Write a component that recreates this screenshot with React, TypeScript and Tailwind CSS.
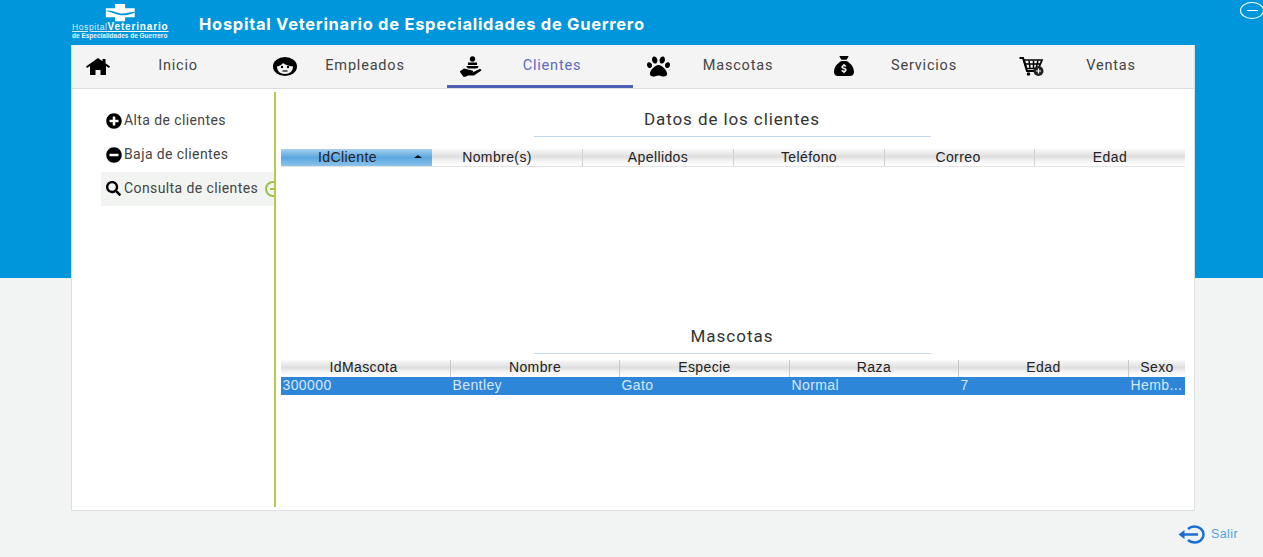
import { FaPaw, FaPlusCircle, FaMinusCircle, FaSearch } from "react-icons/fa";
import { FaSackDollar } from "react-icons/fa6";
import type { ReactNode } from "react";

const roboto = "font-['Roboto','Liberation_Sans',sans-serif]";

function Logo() {
  return (
    <div className="w-[96px] h-[45px] flex flex-col items-center shrink-0">
      <svg width="33" height="18" viewBox="0 0 36 23" preserveAspectRatio="none" className="mt-[4px]">
        <path d="M12 0h11v5.500h10.500V17H23v5H12v-5H2V5.500h10z" fill="#fff" />
        <path d="M0 9c9-3 13 3 20 3 6 0 11-3 16-2-5 2-8 4.500-15 4.500C13 14.500 8 9.500 0 9z" fill="#0096db" />
      </svg>
      <div className="w-full flex items-baseline text-white leading-[9px] font-['Liberation_Sans',sans-serif]">
        <span className="text-[8.500px] underline tracking-[0.6px] text-[#d8eefa]">Hospital</span>
        <span className="text-[10px] font-bold underline tracking-[0.85px]">Veterinario</span>
      </div>
      <div className="w-full whitespace-nowrap text-[#e8f5fc] text-[6.500px] leading-[7px] font-bold font-['Liberation_Sans',sans-serif]">
        de Especialidades de Guerrero
      </div>
    </div>
  );
}

function HomeIcon() {
  return (
    <svg width="24" height="17" viewBox="0 0 24 17">
      <path d="M12 0l4.500 3.200V1h3v4.300L24 8.500l-1 1.500-3-2V17h-5.500v-5h-5v5H4V8l-3 2-1-1.500z" fill="#000" />
    </svg>
  );
}

function FaceIcon() {
  return (
    <svg width="24" height="19" viewBox="0 0 24 19">
      <ellipse cx="12" cy="9.500" rx="12" ry="9.500" fill="#000" />
      <path d="M4 9.500c2.500-.5 5-1.500 6-3.500 2 2 6 3 10 3.500 0 4.500-3 7.500-8 7.500s-8-3-8-7.500z" fill="#f4f4f4" />
      <circle cx="9" cy="10" r="1.200" fill="#000" />
      <circle cx="15" cy="10" r="1.200" fill="#000" />
      <path d="M9.500 14h5" stroke="#000" strokeWidth="1.200" />
    </svg>
  );
}

function HandIcon() {
  return (
    <svg width="25" height="21" viewBox="0 0 25 21">
      <circle cx="12.500" cy="3" r="2.700" fill="#000" />
      <path d="M8 6.500h9v2.500H8zM6.500 10h12c0 1.500-1 2.500-2.500 2.500H9c-1.500 0-2.500-1-2.500-2.500z" fill="#000" />
      <path d="M0.500 15l3.500-2.500 2 .5 6 1.500c2 .5 1.500 2-.5 2h-2.500 3.500l7-3.500c1.500-.5 2.500 1 1.500 1.800l-7 4.700H8l-3 1.500z" fill="#000" />
      <path d="M0.500 15l4 5.500" stroke="#000" strokeWidth="2" />
    </svg>
  );
}

function CartIcon() {
  return (
    <svg width="25" height="19" viewBox="0 0 25 19">
      <path d="M0.500 1h3.500l4 13h10" fill="none" stroke="#000" strokeWidth="2" />
      <path d="M5 3h18l-3.500 8.500H7.500z" fill="none" stroke="#000" strokeWidth="1.700" />
      <path d="M10 3.500l1 8M14.500 3.500v8M19 3.500l-2 8M6 7h15" stroke="#000" strokeWidth="1.500" />
      <circle cx="9.500" cy="17" r="1.800" fill="#000" />
      <circle cx="19.500" cy="14" r="5" fill="#222" />
      <path d="M17 14h5M19.500 11.500v5" stroke="#fff" strokeWidth="1.200" />
    </svg>
  );
}

function ExitIcon() {
  return (
    <svg width="31" height="19" viewBox="0 0 31 19" className="shrink-0">
      <path d="M10 4A9 8 0 1 1 10 15" fill="none" stroke="#1a6fd0" strokeWidth="2.500" />
      <path d="M3 9.500h17" stroke="#1a6fd0" strokeWidth="2.500" />
      <path d="M0.500 9.500L6.500 5v9z" fill="#1a6fd0" />
    </svg>
  );
}

function Tab({ icon, label, active }: { icon: ReactNode; label: string; active?: boolean }) {
  return (
    <div className="relative flex items-center h-[43px]">
      <div className="w-[50px] flex justify-center items-center text-black pb-[1px] shrink-0">{icon}</div>
      <div className={`w-[110px] text-center text-[14.500px] tracking-[0.8px] pb-[2px] ${roboto} ${active ? "text-[#5c6bc0]" : "text-[#444]"}`}>
        {label}
      </div>
      {active && <span className="absolute left-0 right-0 bottom-0 h-[3px] bg-[#4f5fb5]" />}
    </div>
  );
}

function SideItem({ icon, label, active }: { icon: ReactNode; label: string; active?: boolean }) {
  return (
    <div className={`h-[34px] flex items-center pl-[4px] gap-[2px] overflow-hidden whitespace-nowrap text-[14px] tracking-[0.4px] text-[#444] ${roboto} ${active ? "bg-[#f2f4f1]" : ""}`}>
      <span className="w-[17px] pb-[1px] flex justify-center text-black shrink-0">{icon}</span>
      <span className="pb-[2px]">{label}</span>
      {active && (
        <span className="ml-[5px] w-[16px] h-[16px] rounded-full border-2 border-[#9bc14a] shrink-0 flex items-center justify-center">
          <span className="w-[6px] h-[2px] bg-[#9bc14a]" />
        </span>
      )}
    </div>
  );
}

const headGradient = "bg-[linear-gradient(#fafafa_0%,#dedede_45%,#f4f4f4_70%,#ffffff_100%)]";
const cellFont = "font-['Liberation_Sans',sans-serif] text-[14px] leading-[14px] tracking-[0.4px] text-[#222]";

function App() {
  return (
    <div className="w-[1263px] h-[557px] overflow-hidden flex flex-col bg-[linear-gradient(#0096db_278px,#f2f4f4_278px)]">
      <header className="h-[45px] flex items-start pl-[72px] shrink-0">
        <Logo />
        <h1 className="ml-[31px] mt-[15px] text-white font-bold text-[16.500px] leading-[19px] tracking-[0.72px] whitespace-nowrap font-['Inter','Liberation_Sans',sans-serif]">
          Hospital Veterinario de Especialidades de Guerrero
        </h1>
        <div className="ml-auto mt-[2px] mr-[-1px] w-[24px] h-[17px] rounded-[50%] border-[1.500px] border-white flex items-center justify-center">
          <span className="w-[11px] h-[1.500px] bg-white" />
        </div>
      </header>

      <main className="ml-[71px] w-[1124px] h-[466px] bg-white border border-[#dcdfdf] border-t-0 flex flex-col shrink-0">
        <nav className="h-[44px] bg-[#f4f4f4] border-b border-[#dddddd] grid grid-cols-[187px_187px_186px_186px_187px_187px] pl-[1px] shrink-0">
          <Tab icon={<HomeIcon />} label="Inicio" />
          <Tab icon={<FaceIcon />} label="Empleados" />
          <Tab icon={<HandIcon />} label="Clientes" active />
          <Tab icon={<FaPaw size={23} />} label="Mascotas" />
          <Tab icon={<FaSackDollar size={20} />} label="Servicios" />
          <Tab icon={<CartIcon />} label="Ventas" />
        </nav>

        <div className="flex flex-1 min-h-0 pt-[3px] pb-[3px]">
          <aside className="w-[204px] h-full shrink-0 border-r-2 border-[#b9c94f] pl-[29px] pt-[12px]">
            <SideItem icon={<FaPlusCircle size={16} />} label="Alta de clientes" />
            <SideItem icon={<FaMinusCircle size={16} />} label="Baja de clientes" />
            <SideItem icon={<FaSearch size={15} />} label="Consulta de clientes" active />
          </aside>

          <section className="flex-1 pl-[5px] pr-[9px] flex flex-col items-stretch">
            <div className={`self-center w-[397px] mr-[2px] mt-[15px] h-[30px] border-b border-[#c4d9ec] text-center text-[17px] leading-[24px] tracking-[0.9px] text-[#333] ${roboto}`}>
              Datos de los clientes
            </div>
            <div className="mt-[12px] h-[18px] grid grid-cols-[151px_151px_151px_151px_150px_150px] border-b border-[#e4e4e4]">
              <div className={`h-[17px] pb-[2px] flex items-center bg-[linear-gradient(#a8d0ee_0%,#5aa7e0_50%,#8cc3ea_100%)] ${cellFont}`}>
                <span className="w-[133px] text-center">IdCliente</span>
                <span className="w-0 h-0 border-x-[4px] border-x-transparent border-b-[3px] border-b-[#111]" />
              </div>
              {["Nombre(s)", "Apellidos", "Teléfono", "Correo", "Edad"].map((h) => (
                <div key={h} className={`h-[17px] pb-[2px] flex items-center justify-center border-r border-[#d0d0d0] last:border-r-0 ${h === "Nombre(s)" ? "pr-[20px]" : ""} ${h === "Correo" ? "pr-[3px]" : ""} ${headGradient} ${cellFont}`}>
                  {h}
                </div>
              ))}
            </div>

            <div className={`self-center w-[397px] mr-[2px] mt-[157px] h-[30px] border-b border-[#c4d9ec] text-center text-[17px] leading-[24px] tracking-[1px] text-[#333] ${roboto}`}>
              Mascotas
            </div>
            <div className="mt-[6px] h-[17px] grid grid-cols-[170px_169px_170px_169px_170px_56px]">
              {["IdMascota", "Nombre", "Especie", "Raza", "Edad", "Sexo"].map((h) => (
                <div key={h} className={`h-[17px] flex items-center justify-center pb-[3px] border-r border-[#c8c8c8] last:border-r-0 ${h === "IdMascota" ? "pr-[4px]" : ""} ${headGradient} ${cellFont}`}>
                  {h}
                </div>
              ))}
            </div>
            <div className="h-[18px] grid grid-cols-[170px_169px_170px_169px_170px_56px] bg-[#2e86d9]">
              {["300000", "Bentley", "Gato", "Normal", "7", "Hemb..."].map((c) => (
                <div key={c} className="h-[18px] pl-[1.500px] pb-[2px] flex items-center whitespace-nowrap overflow-hidden text-[14px] leading-[14px] tracking-[0.4px] text-[#d5e7f9] font-['Liberation_Sans',sans-serif]">
                  {c}
                </div>
              ))}
            </div>
          </section>
        </div>
      </main>

      <footer className="flex justify-end items-center gap-[2px] pr-[25px] mt-[14px]">
        <ExitIcon />
        <span className="text-[12.500px] tracking-[0.4px] text-[#4ea3dc] font-['Liberation_Sans',sans-serif]">Salir</span>
      </footer>
    </div>
  );
}

export default App;
